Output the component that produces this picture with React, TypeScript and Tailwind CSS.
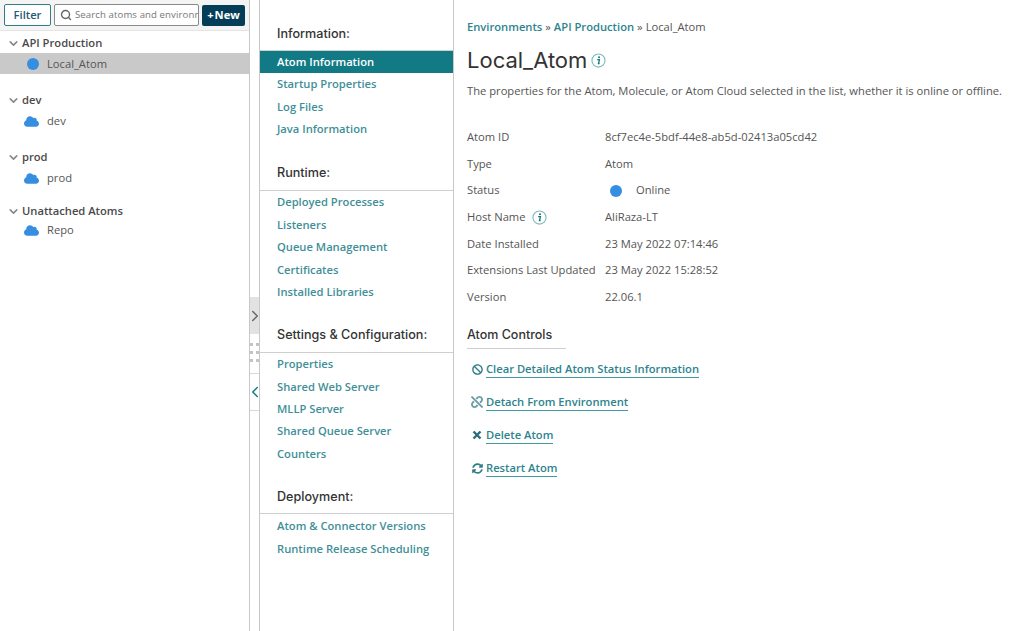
import { ChevronDown, ChevronLeft, ChevronRight, Search } from "lucide-react";
import { FaBan, FaCloud, FaSyncAlt, FaUnlink } from "react-icons/fa";
import type { ReactNode } from "react";

const navGroups = [
  { title: "Information:", items: ["Atom Information", "Startup Properties", "Log Files", "Java Information"], mt: "mt-[23px]", pt: "" },
  { title: "Runtime:", items: ["Deployed Processes", "Listeners", "Queue Management", "Certificates", "Installed Libraries"], mt: "mt-[22px]", pt: "pt-[1px]" },
  { title: "Settings & Configuration:", items: ["Properties", "Shared Web Server", "MLLP Server", "Shared Queue Server", "Counters"], mt: "mt-[21px]", pt: "pt-[1px]" },
  { title: "Deployment:", items: ["Atom & Connector Versions", "Runtime Release Scheduling"], mt: "mt-[21px]", pt: "pt-[1px]" },
];

const details = [
  ["Atom ID", "8cf7ec4e-5bdf-44e8-ab5d-02413a05cd42"],
  ["Type", "Atom"],
  ["Status", "Online"],
  ["Host Name", "AliRaza-LT"],
  ["Date Installed", "23 May 2022 07:14:46"],
  ["Extensions Last Updated", "23 May 2022 15:28:52"],
  ["Version", "22.06.1"],
];

function InfoIcon({ size }: { size: number }) {
  return (
    <svg width={size} height={size} viewBox="0 0 16 16" className="shrink-0">
      <circle cx="8" cy="8" r="7" fill="none" stroke="#7fb8bd" strokeWidth="1.2" />
      <circle cx="8.6" cy="4.6" r="1.1" fill="#127a85" />
      <path d="M6.6 7h2.4l-1 4.2h1.2" fill="none" stroke="#127a85" strokeWidth="1.4" />
    </svg>
  );
}

function TreeGroup({ label, child, icon, mt, childMt = "" }: { label: string; child: string; icon: ReactNode; mt: string; childMt?: string }) {
  const active = child === "Local_Atom";
  return (
    <div className={mt}>
      <div className="flex h-[20px] items-center pt-[1px] pl-[7px] text-[11.2px] font-semibold text-[#4a4a4a]">
        <ChevronDown size={13} strokeWidth={3} className="mr-[2px] text-[#8a8a8a]" />
        {label}
      </div>
      <div className={`flex h-[21px] items-center pt-[1px] text-[11.2px] text-[#555555] ${childMt} ${active ? "bg-[#c9c9c9]" : ""}`}>
        <span className="flex w-[47px] justify-end pr-[8px]">{icon}</span>
        {child}
      </div>
    </div>
  );
}

function ControlLink({ icon, label }: { icon: ReactNode; label: string }) {
  return (
    <div className="flex h-[33px] items-center">
      <span className="flex w-[19px] justify-center pl-[1px] text-[#2f7f88]">{icon}</span>
      <span className="border-b border-[#3f9aa3] text-[11.2px] leading-[16px] font-semibold text-[#2d848e]">{label}</span>
    </div>
  );
}

const dot = <span className="block size-[12px] rounded-full bg-[#358ee0]" />;
const cloud = <FaCloud size={15} className="text-[#358ee0]" />;

export default function App() {
  return (
    <div className="flex h-[631px] w-[1024px] overflow-hidden bg-white font-['Open_Sans','Noto_Sans',sans-serif]">
      <aside className="w-[250px] shrink-0 border-r border-[#c8c8c8]">
        <div className="flex h-[31px] items-center gap-[3px] border-b border-[#e4e4e4] bg-[#f4f4f4] pl-[4px]">
          <button className="h-[22px] w-[47px] rounded-[2px] border border-[#2d7f88] bg-white text-[11.2px] font-semibold text-[#1f5a73]">
            Filter
          </button>
          <div className="flex h-[22px] w-[145px] items-center rounded-[2px] border border-[#8a8a8a] bg-white pl-[5px]">
            <Search size={12} strokeWidth={2.8} className="mr-[3px] shrink-0 text-[#666666]" />
            <input
              readOnly
              placeholder="Search atoms and environments"
              className="w-full min-w-0 bg-transparent text-[9.6px] tracking-[0.1px] outline-none placeholder:text-[#777777]"
            />
          </div>
          <button className="flex h-[21px] w-[43px] items-center justify-center gap-[1px] rounded-[2px] bg-[#033d58] text-[11.2px] font-bold text-white">
            <span>+</span>
            <span>New</span>
          </button>
        </div>
        <TreeGroup label="API Production" child="Local_Atom" icon={dot} mt="mt-[2px]" />
        <TreeGroup label="dev" child="dev" icon={cloud} mt="mt-[16px]" />
        <TreeGroup label="prod" child="prod" icon={cloud} mt="mt-[16px]" />
        <TreeGroup label="Unattached Atoms" child="Repo" icon={cloud} mt="mt-[13px]" childMt="-mt-[2px]" />
      </aside>

      <div className="flex w-[10px] shrink-0 flex-col items-center border-r border-[#c8c8c8] pt-[297px]">
        <div className="flex h-[37px] w-full items-center justify-center bg-[#e2e2e2]">
          <ChevronRight size={18} strokeWidth={2} className="shrink-0 text-[#666666]" />
        </div>
        <div className="mt-[9px] grid grid-cols-2 gap-x-[3px] gap-y-[5px]">
          {[0, 1, 2, 3, 4, 5].map((n) => (
            <span key={n} className="size-[3px] bg-[#c4c4c4]" />
          ))}
        </div>
        <div className="mt-[11px] flex h-[38px] w-full items-center justify-center border-y border-[#d8d8d8]">
          <ChevronLeft size={18} strokeWidth={2} className="shrink-0 text-[#127a85]" />
        </div>
      </div>

      <nav className="w-[194px] shrink-0 border-r border-[#c8c8c8]">
        {navGroups.map((group) => (
          <div key={group.title} className={group.mt}>
            <div className="flex h-[28px] items-center border-b border-[#cfcfcf] pb-[5px] pl-[17px] font-['Inter',sans-serif] text-[12.6px] font-medium text-[#333333]">
              {group.title}
            </div>
            <div className={group.pt}>
              {group.items.map((item) =>
                item === "Atom Information" ? (
                  <div key={item} className="flex h-[22.4px] items-center bg-[#127a85] pl-[17px] text-[11.2px] font-semibold text-white">
                    {item}
                  </div>
                ) : (
                  <div key={item} className="flex h-[22.4px] items-center pl-[17px] text-[11.2px] font-semibold text-[#3f8f98]">
                    {item}
                  </div>
                ),
              )}
            </div>
          </div>
        ))}
      </nav>

      <main className="min-w-0 flex-1 pl-[13px]">
        <div className="mt-[18px] flex h-[18px] items-center text-[11.2px] text-[#555555]">
          <span className="font-semibold text-[#2d848e]">Environments</span>
          <span className="px-[3px]">»</span>
          <span className="font-semibold text-[#2d848e]">API Production</span>
          <span className="px-[3px]">»</span>
          <span>Local_Atom</span>
        </div>
        <div className="mt-[9px] flex h-[30px] items-center gap-[4px]">
          <h1 className="font-['Inter',sans-serif] text-[22px] font-normal text-[#333333]">Local_Atom</h1>
          <InfoIcon size={15} />
        </div>
        <p className="mt-[7px] text-[11.2px] leading-[18px] whitespace-nowrap text-[#555555]">
          The properties for the Atom, Molecule, or Atom Cloud selected in the list, whether it is online or offline.
        </p>
        <div className="mt-[24px]">
          {details.map(([name, value]) => (
            <div key={name} className="flex h-[26.67px] items-center text-[11.2px] text-[#555555]">
              <span className="flex w-[138px] shrink-0 items-center gap-[7px] whitespace-nowrap">
                {name}
                {name === "Host Name" && <InfoIcon size={15} />}
              </span>
              {name === "Status" ? (
                <span className="flex items-center pl-[5px]">
                  <span className="mr-[14px] size-[12px] rounded-full bg-[#358ee0]" />
                  {value}
                </span>
              ) : (
                <span>{value}</span>
              )}
            </div>
          ))}
        </div>
        <h2 className="mt-[14px] w-[99px] border-b border-[#cfcfcf] pb-[3px] font-['Inter',sans-serif] text-[12.5px] leading-[20px] font-medium whitespace-nowrap text-[#333333]">
          Atom Controls
        </h2>
        <div className="mt-[4px]">
          <ControlLink icon={<FaBan size={11} />} label="Clear Detailed Atom Status Information" />
          <ControlLink icon={<FaUnlink size={12} className="text-[#6a9ea4]" />} label="Detach From Environment" />
          <ControlLink
            icon={
              <svg width="10" height="10" viewBox="0 0 10 10">
                <path d="M1.5 1.5l7 7M8.5 1.5l-7 7" stroke="#2a6f78" strokeWidth="2.4" />
              </svg>
            }
            label="Delete Atom"
          />
          <ControlLink icon={<FaSyncAlt size={11} />} label="Restart Atom" />
        </div>
      </main>
    </div>
  );
}
